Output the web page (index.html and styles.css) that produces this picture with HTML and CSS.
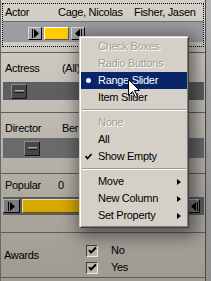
FILE: index.html
```html
<!DOCTYPE html>
<html>
<head>
<meta charset="utf-8">
<link rel="stylesheet" href="styles.css">
</head>
<body>
<div class="screen">
  <div class="panel">
    <div class="focus">
      <div class="hdr">
        <span class="hcell first">Actor</span>
        <span class="hcell">Cage, Nicolas</span>
        <span class="hcell">Fisher, Jasen</span>
      </div>
      <div class="band band-actor">
        <span class="btn btn-min" style="margin-left:25px"><svg width="7" height="9" viewBox="0 0 7 9"><rect x="0" y="0" width="1" height="9" fill="#000"/><path d="M2 0 L7 4.5 L2 9 Z" fill="#000"/></svg></span>
        <span class="fill fill-bright" style="width:25px"></span>
        <span class="btn btn-max"><svg width="7" height="9" viewBox="0 0 7 9"><path d="M5 0 L0 4.5 L5 9 Z" fill="#000"/><rect x="6" y="0" width="1" height="9" fill="#000"/></svg></span>
      </div>
    </div>
    <div class="sep sep1"></div>

    <div class="lrow lrow-actress"><span class="lbl">Actress</span><span class="val">(All)</span></div>
    <div class="band band-dark band-actress">
      <span class="thumb" style="margin-left:8px"><span class="grip"></span></span>
    </div>
    <div class="sep sep2"></div>

    <div class="lrow lrow-director"><span class="lbl">Director</span><span class="val">Ber</span></div>
    <div class="band band-dark band-director">
      <span class="thumb" style="margin-left:21px"><span class="grip"></span></span>
    </div>
    <div class="sep sep3"></div>

    <div class="lrow lrow-popular"><span class="lbl">Popular</span><span class="val val-num">0</span></div>
    <div class="band band-popular">
      <span class="btn btn-pop btn-pop-min"><svg width="7" height="9" viewBox="0 0 7 9"><rect x="0" y="0" width="1" height="9" fill="#000"/><path d="M2 0 L7 4.5 L2 9 Z" fill="#000"/></svg></span>
      <span class="fill fill-pop"></span>
      <span class="btn btn-pop btn-pop-max"><svg width="7" height="9" viewBox="0 0 7 9"><path d="M5 0 L0 4.5 L5 9 Z" fill="#000"/><rect x="6" y="0" width="1" height="9" fill="#000"/></svg></span>
    </div>
    <div class="sep sep4"></div>

    <div class="awards">
      <span class="lbl lbl-awards">Awards</span>
      <div class="opts">
        <div class="opt"><span class="cb"><svg width="9" height="9" viewBox="0 0 9 9"><path d="M1 4 L3 6.5 L8 1.5" stroke="#000" stroke-width="2" fill="none"/></svg></span><span class="opt-text">No</span></div>
        <div class="opt"><span class="cb"><svg width="9" height="9" viewBox="0 0 9 9"><path d="M1 4 L3 6.5 L8 1.5" stroke="#000" stroke-width="2" fill="none"/></svg></span><span class="opt-text">Yes</span></div>
      </div>
    </div>
    <div class="sep sep5"></div>
  </div>
  <div class="strip"></div>
</div>

<div class="menu">
  <div class="item disabled"><span class="mark"></span><span class="txt">Check Boxes</span></div>
  <div class="item disabled"><span class="mark"></span><span class="txt">Radio Buttons</span></div>
  <div class="item active"><span class="mark"><span class="bullet"></span></span><span class="txt">Range Slider</span></div>
  <div class="item"><span class="mark"></span><span class="txt">Item Slider</span></div>
  <div class="msep"></div>
  <div class="item disabled"><span class="mark"></span><span class="txt">None</span></div>
  <div class="item"><span class="mark"></span><span class="txt">All</span></div>
  <div class="item"><span class="mark"><svg width="7" height="7" viewBox="0 0 7 7"><path d="M0.5 3 L2.5 5.5 L6.5 1" stroke="#000" stroke-width="1.6" fill="none"/></svg></span><span class="txt">Show Empty</span></div>
  <div class="msep"></div>
  <div class="item"><span class="mark"></span><span class="txt">Move</span><span class="sub"></span></div>
  <div class="item"><span class="mark"></span><span class="txt">New Column</span><span class="sub"></span></div>
  <div class="item"><span class="mark"></span><span class="txt">Set Property</span><span class="sub"></span></div>
</div>

<svg class="cursor" width="12" height="19" viewBox="0 0 12 19"><path d="M0.5 0.5 L0.5 16.5 L4.5 12.5 L7.5 18.5 L9.5 17.5 L6.5 11.5 L11.5 11.5 Z" fill="#fff" stroke="#000" stroke-width="1" stroke-linejoin="miter"/></svg>
</body>
</html>
```
FILE: styles.css
```css
* { box-sizing: border-box; }
html, body { margin: 0; padding: 0; }
body {
  width: 211px;
  height: 281px;
  overflow: hidden;
  position: relative;
  font-family: "Liberation Sans", Arial, sans-serif;
  font-size: 11px;
  letter-spacing: -0.3px;
  line-height: 13px;
  color: #000;
  background: #a8a8a8;
}
.screen { display: flex; height: 281px; }
.panel {
  width: 206px;
  height: 281px;
  border-left: 1px solid #6a6862;
  border-right: 1px solid #4a4a4a;
  background: linear-gradient(to bottom, #d4d0c8 0px, #ccc8c0 60px, #bab6ae 140px, #aca8a0 200px, #9e9a92 281px);
  display: flex;
  flex-direction: column;
}
.strip { flex: 1; background: linear-gradient(to bottom, #b4b4b4, #8e8e8e); }

.focus {
  margin: 3px 1px 0 1px;
  border: 1px dotted #000;
  padding-bottom: 4px;
}
.hdr {
  display: grid;
  grid-template-columns: 55px 76px 1fr;
  height: 18px;
  border-bottom: 1px solid #6e6e6e;
  align-items: center;
  white-space: nowrap;
}
.hcell.first { padding-left: 2px; }

.band { display: flex; align-items: flex-start; }
.band-actor { height: 20px; padding-top: 5px; background: #9d9da1; }
.band-dark { margin: 0 1px 0 2px; }
.band-actress { height: 18px; padding-top: 2px; background: #5f5f61; }
.band-director { height: 20px; padding-top: 3px; background: #6a6a6c; }
.band-popular { margin: 0 1px 0 2px; height: 18px; padding-top: 2px; background: #5c5c5c; }

.btn {
  display: flex;
  align-items: center;
  justify-content: center;
  width: 14px;
  height: 13px;
  background: #a4a4a4;
  border: 1px solid;
  border-color: #d8d8d8 #000 #000 #d8d8d8;
}
.btn-max { margin-left: 2px; }
.fill {
  height: 13px;
  border: 1px solid;
  border-color: #fff #5a5a5a #5a5a5a #fff;
}
.fill-bright { margin-left: 2px; background: #ffcc00; }
.btn-pop { height: 14px; background: #7a7a7a; border-color: #b0b0b0 #000 #000 #b0b0b0; }
.btn-pop-min { width: 17px; }
.btn-pop-max { width: 12px; margin-left: 2px; }
.fill-pop { flex: none; width: 164px; height: 14px; margin-left: 2px; background: #d6a800; border-color: #e8dca0 #6a5a00 #6a5a00 #e8dca0; }

.thumb {
  position: relative;
  display: flex;
  align-items: center;
  justify-content: center;
  width: 16px;
  height: 15px;
  background: #474747;
  border: 1px solid;
  border-color: #8a8a8a #141414 #141414 #8a8a8a;
}
.grip {
  width: 9px;
  height: 3px;
  border-top: 1px solid #a8a8a8;
  border-bottom: 1px solid #1a1a1a;
  background: #707070;
}

.sep { height: 1px; background: #5e5e5e; flex: none; }
.sep1 { margin-top: 5px; }
.sep2 { margin-top: 12px; }
.sep3 { margin-top: 15px; }
.sep4 { margin-top: 17px; }
.sep5 { margin-top: 0; }

.lrow { display: flex; white-space: nowrap; }
.lbl { width: 61px; padding-left: 4px; flex: none; }
.val-num { margin-left: -4px; }
.lrow-actress { padding-top: 9px; padding-bottom: 7px; }
.lrow-director { padding-top: 9px; padding-bottom: 3px; }
.lrow-popular { padding-top: 5px; padding-bottom: 5px; }

.awards { display: flex; height: 44px; }
.lbl-awards { width: 85px; padding-left: 3px; padding-top: 16px; }
.opts { display: flex; flex-direction: column; padding-top: 9px; }
.opt { display: flex; align-items: center; height: 17px; }
.opt-text { margin-left: 13px; }
.cb {
  display: flex;
  align-items: center;
  justify-content: center;
  width: 12px;
  height: 12px;
  background: #bcb8b0;
  border: 1px solid;
  border-color: #3e3e3e #e8e8e8 #e8e8e8 #3e3e3e;
}

.menu {
  position: absolute;
  left: 79px;
  top: 36px;
  width: 110px;
  padding: 1px 1px 3px 1px;
  background: #d4d0c8;
  border: 1px solid;
  border-color: #d4d0c8 #404040 #404040 #d4d0c8;
  box-shadow: inset 1px 1px #fff, inset -1px -1px #808080, 3px 4px 16px 4px rgba(0,0,0,0.5);
}
.item {
  display: flex;
  align-items: center;
  height: 17px;
  white-space: nowrap;
}
.mark { width: 17px; flex: none; display: flex; align-items: center; padding-left: 4px; }
.bullet { width: 5px; height: 5px; border-radius: 50%; background: #fff; margin-left: 1px; }
.item.active { background: #0a246a; color: #fff; }
.item.disabled { color: #a19d95; text-shadow: 1px 1px 0 #fff; }
.sub {
  margin-left: auto;
  margin-right: 6px;
  width: 0;
  height: 0;
  border-top: 3.5px solid transparent;
  border-bottom: 3.5px solid transparent;
  border-left: 4px solid #000;
}
.msep {
  height: 8px;
  display: flex;
  flex-direction: column;
  justify-content: center;
  padding: 0 1px;
}
.msep::before { content: ""; display: block; height: 1px; background: #a09c94; }
.msep::after { content: ""; display: block; height: 1px; background: #fff; }

.cursor { position: absolute; left: 128px; top: 79px; }
```
